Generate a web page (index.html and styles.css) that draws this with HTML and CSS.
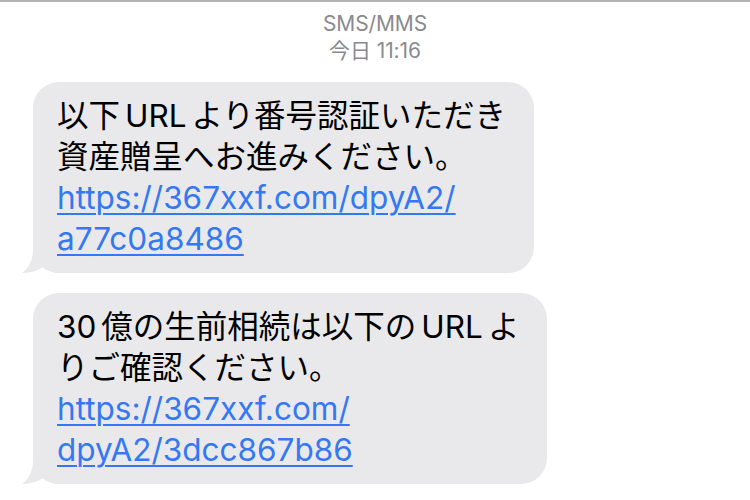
FILE: index.html
```html
<!DOCTYPE html>
<html lang="ja">
<head>
<meta charset="utf-8">
<title>SMS/MMS</title>
<link rel="stylesheet" href="styles.css">
</head>
<body>
<div class="screen">
  <header class="meta">
    <div class="meta-service">SMS/MMS</div>
    <div class="meta-time">今日 11:16</div>
  </header>
  <div class="thread">
    <div class="bubble">
      <p class="msg">以下<span class="latin">URL</span>より番号認証いただき<br>資産贈呈へお進みください。<br><a class="link" href="#">https://367xxf.com/dpyA2/<br>a77c0a8486</a></p>
      <svg class="tail" viewBox="0 0 40 30" width="40" height="30" aria-hidden="true"><path d="M11 0 L11 6 C11 17 7 25 0 30 C8 30 15 28 21 24 C26 28 31 30 40 30 L40 0 Z"/></svg>
    </div>
    <div class="bubble">
      <p class="msg">30<span class="gap"></span>億の生前相続は以下の<span class="latin">URL</span>よ<br>りご確認ください。<br><a class="link" href="#">https://367xxf.com/<br>dpyA2/3dcc867b86</a></p>
      <svg class="tail" viewBox="0 0 40 30" width="40" height="30" aria-hidden="true"><path d="M11 0 L11 6 C11 17 7 25 0 30 C8 30 15 28 21 24 C26 28 31 30 40 30 L40 0 Z"/></svg>
    </div>
  </div>
</div>
</body>
</html>
```
FILE: styles.css
```css
html, body {
  margin: 0;
  padding: 0;
  background: #ffffff;
}
body {
  width: 750px;
  height: 500px;
  overflow: hidden;
  font-family: "Inter", "Noto Sans CJK JP", sans-serif;
}
.screen {
  border-top: 2px solid #b4b4b4;
  height: 498px;
  box-sizing: border-box;
}
.meta {
  text-align: center;
  color: #8a8a8e;
  font-size: 21px;
  line-height: 27px;
  padding-top: 8px;
  letter-spacing: -0.1px;
}
.thread {
  display: flex;
  flex-direction: column;
  align-items: flex-start;
  gap: 20px;
  padding: 18px 0 0 33px;
}
.bubble {
  position: relative;
  background: #e9e9eb;
  border-radius: 26px;
  padding: 13px 28px 14px 24px;
}
.msg {
  position: relative;
  z-index: 1;
  margin: 0;
  font-size: 31.5px;
  line-height: 41px;
  color: #000;
  white-space: nowrap;
}
.latin {
  margin: 0 5px;
}
.gap {
  display: inline-block;
  width: 5px;
}
.link {
  color: #3478f2;
  text-decoration: underline;
  text-decoration-thickness: 2px;
  text-underline-offset: 4px;
}
.tail {
  position: absolute;
  left: -11px;
  bottom: 0;
  fill: #e9e9eb;
}
```
